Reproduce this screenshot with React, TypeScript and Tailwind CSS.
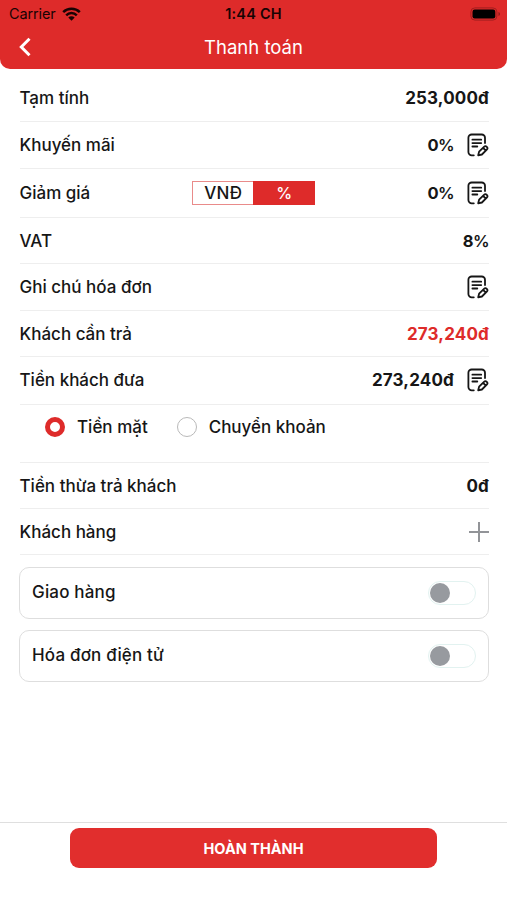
import type { ReactNode } from "react";

function EditIcon() {
  return (
    <svg
      className="w-[22px] h-6 shrink-0"
      viewBox="0 0 22 24"
      fill="none"
      stroke="#161616"
      strokeWidth="1.8"
      strokeLinecap="round"
      strokeLinejoin="round"
    >
      <path d="M6.8 22.3H4.7a3.3 3.3 0 0 1-3.3-3.3V4.8a3.3 3.3 0 0 1 3.3-3.3h10a3.3 3.3 0 0 1 3.3 3.3v5.2" />
      <path d="M5.4 6.7h8.8M5.4 10.1h8.8M5.4 13.5h4.9" />
      <path d="M11.2 22.3l.9-3.6 4.9-4.9a2 2 0 0 1 2.8 0 2 2 0 0 1 0 2.8l-4.9 4.9-3.7.8zM16.2 15l2.4 2.4" />
    </svg>
  );
}

function PlusIcon() {
  return (
    <svg
      className="size-5"
      viewBox="0 0 20 20"
      stroke="#929498"
      strokeWidth="2"
    >
      <path d="M10 0v20M0 10h20" />
    </svg>
  );
}

function WifiIcon() {
  return (
    <svg className="w-[19px] h-[14px]" viewBox="0 0 19 14" fill="none">
      <path
        d="M1.2 5.2a11.8 11.8 0 0 1 16.6 0M4.2 8.3a7.5 7.5 0 0 1 10.6 0"
        stroke="#190303"
        strokeWidth="2.5"
      />
      <path d="M9.5 13.7L6.3 10.6a4.5 4.5 0 0 1 6.4 0z" fill="#190303" />
    </svg>
  );
}

function Percent({ value }: { value: number }) {
  return (
    <span className="text-[16.5px] tracking-[-0.035em]">
      {value}
      <span className="font-semibold">%</span>
    </span>
  );
}

type RowProps = {
  label: string;
  value?: ReactNode;
  edit?: boolean;
  className?: string;
  valueClass?: string;
  children?: ReactNode;
};

function Row({
  label,
  value,
  edit,
  className = "h-[47px]",
  valueClass = "",
  children,
}: RowProps) {
  return (
    <div
      className={`flex items-center border-b border-[#eeeeee] ${className}`}
    >
      <span>{label}</span>
      {children}
      <div className="ml-auto flex items-center gap-[13px]">
        {value && (
          <span className={`font-bold tracking-[0.01em] ${valueClass}`}>
            {value}
          </span>
        )}
        {edit && <EditIcon />}
      </div>
    </div>
  );
}

function ToggleCard({ label }: { label: string }) {
  return (
    <div className="-ml-[0.5px] flex h-[52px] items-center justify-between rounded-[10px] border-[1.5px] border-[#dedede] px-3">
      <span className="-mt-[3px] tracking-[0.01em]">{label}</span>
      <div className="flex h-6 w-12 items-center rounded-full border border-[#e2f2f0] pl-px">
        <div className="size-5 rounded-full bg-[#979a9f]" />
      </div>
    </div>
  );
}

export default function App() {
  return (
    <main className="flex h-[900px] w-[507px] flex-col bg-white font-['Inter',sans-serif] text-[17px] leading-6 font-medium text-[#161616]">
      <header className="h-[69px] rounded-b-[10px] bg-[#de2b2a]">
        <div className="grid h-[27px] grid-cols-3 items-center pl-[9px] pr-[6px] text-[14.5px] text-[#190303]">
          <div className="flex items-center gap-[6px] font-normal tracking-[-0.01em]">
            Carrier
            <WifiIcon />
          </div>
          <span className="-ml-[3px] text-center font-semibold tracking-[0.015em]">
            1:44 CH
          </span>
          <svg
            className="h-[14px] w-[31px] justify-self-end"
            viewBox="0 0 31 14"
          >
            <rect
              x="0.9"
              y="0.9"
              width="26"
              height="12.2"
              rx="4"
              fill="none"
              stroke="#a21f1f"
            />
            <rect x="2.5" y="2.5" width="22.8" height="9" rx="2.2" />
            <path d="M28.5 5v4q1.5-.6 1.5-2t-1.5-2z" fill="#8d1a1a" />
          </svg>
        </div>
        <div className="grid h-10 grid-cols-3 items-center px-[19px]">
          <svg
            className="h-5 w-3"
            viewBox="0 0 12 20"
            fill="none"
            stroke="white"
            strokeWidth="3"
          >
            <path d="M10.5 1.8L2.3 10l8.2 8.2" />
          </svg>
          <h1 className="text-center text-[18.5px] font-normal text-white">
            Thanh toán
          </h1>
        </div>
      </header>

      <section className="flex-1 pl-[19.5px] pr-[18px]">
        <Row label="Tạm tính" value="253,000đ" className="h-[53px] pt-[6px]" />
        <Row label="Khuyến mãi" value={<Percent value={0} />} edit />
        <Row
          label="Giảm giá"
          value={<Percent value={0} />}
          edit
          className="h-[49px]"
        >
          <div className="ml-[102px] flex h-6 w-[123px] border border-[#e98b8a] text-center leading-[22px]">
            <span className="w-[60px]">VNĐ</span>
            <span className="-my-px -mr-px flex-1 bg-[#de2b2a] text-[16px] leading-6 text-white">
              %
            </span>
          </div>
        </Row>
        <Row
          label="VAT"
          value={<Percent value={8} />}
          className="h-[46px]"
        />
        <Row label="Ghi chú hóa đơn" edit />
        <Row
          label="Khách cần trả"
          value="273,240đ"
          valueClass="text-[#de2b2a]"
          className="h-[46px]"
        />
        <Row
          label="Tiền khách đưa"
          value="273,240đ"
          edit
          className="h-[48px] pb-px"
        />
        <div className="flex h-[58px] items-center border-b border-[#eeeeee] pb-[13px] pl-[25px]">
          <div className="size-5 rounded-full border-[5.5px] border-[#de2b2a]" />
          <span className="ml-[12.5px]">Tiền mặt</span>
          <div className="ml-[29px] size-5 rounded-full border border-[#b9b9b9]" />
          <span className="ml-3">Chuyển khoản</span>
        </div>
        <Row label="Tiền thừa trả khách" value="0đ" className="h-[46px]" />
        <Row label="Khách hàng" value={<PlusIcon />} className="h-[46px]" />
        <div className="mt-3 flex flex-col gap-[11px]">
          <ToggleCard label="Giao hàng" />
          <ToggleCard label="Hóa đơn điện tử" />
        </div>
      </section>

      <footer className="flex h-[78px] justify-center border-t border-[#dfdfdf] pt-[5px]">
        <button className="h-10 w-[367px] rounded-[9px] bg-[#e12e2d] pt-px text-[14.5px] font-bold text-white">
          HOÀN THÀNH
        </button>
      </footer>
    </main>
  );
}
